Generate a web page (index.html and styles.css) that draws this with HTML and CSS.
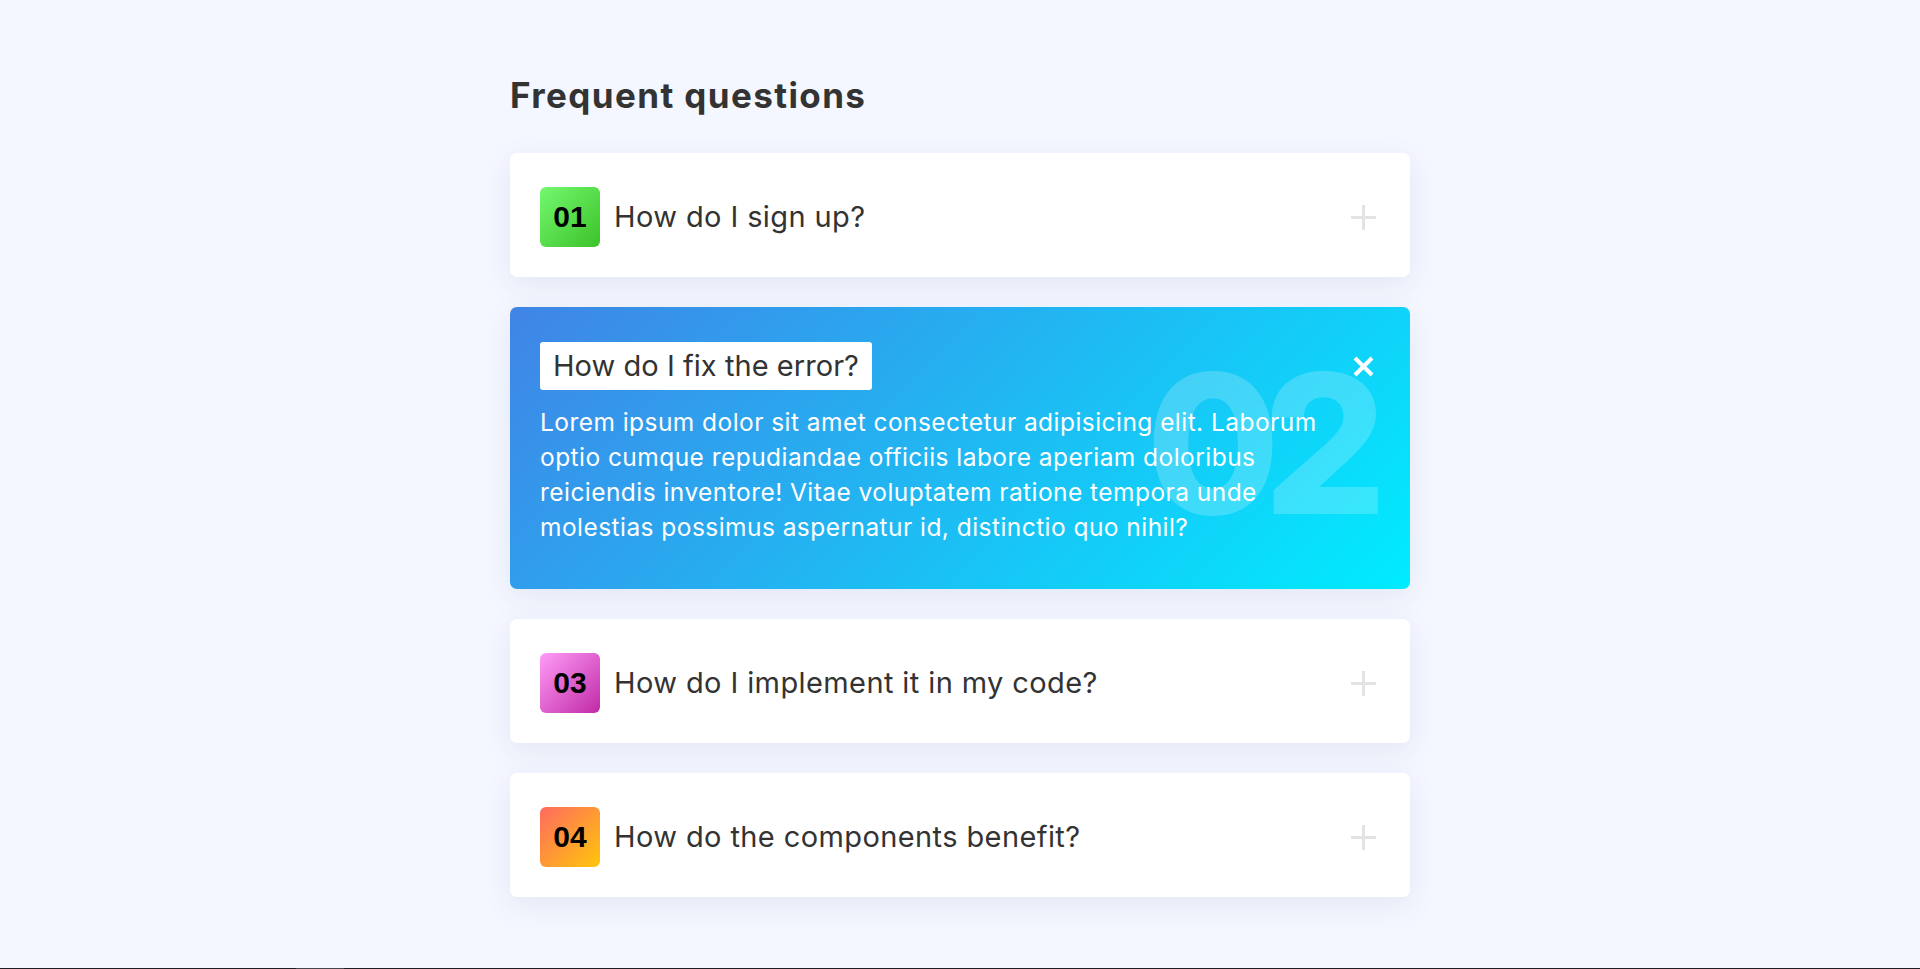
FILE: index.html
```html
<!DOCTYPE html>
<html lang="en">
<head>
<meta charset="utf-8">
<title>Frequent questions</title>
<link rel="stylesheet" href="styles.css">
</head>
<body>
<main class="faq">
  <h1 class="faq-title">Frequent questions</h1>

  <div class="card">
    <span class="num num-green">01</span>
    <span class="question">How do I sign up?</span>
    <span class="toggle">
      <svg width="25" height="25" viewBox="0 0 25 25"><path d="M12.5 0V25M0 12.5H25" stroke="#e3e3e6" stroke-width="3" fill="none"/></svg>
    </span>
  </div>

  <div class="card card-open">
    <span class="watermark">02</span>
    <div class="open-body">
      <span class="label">How do I fix the error?</span>
      <p class="answer">Lorem ipsum dolor sit amet consectetur adipisicing elit. Laborum optio cumque repudiandae officiis labore aperiam doloribus reiciendis inventore! Vitae voluptatem ratione tempora unde molestias possimus aspernatur id, distinctio quo nihil?</p>
    </div>
    <span class="toggle toggle-open">
      <svg width="21" height="21" viewBox="0 0 21 21"><path d="M2 2L19 19M19 2L2 19" stroke="#ffffff" stroke-width="4" fill="none"/></svg>
    </span>
  </div>

  <div class="card">
    <span class="num num-pink">03</span>
    <span class="question">How do I implement it in my code?</span>
    <span class="toggle">
      <svg width="25" height="25" viewBox="0 0 25 25"><path d="M12.5 0V25M0 12.5H25" stroke="#e3e3e6" stroke-width="3" fill="none"/></svg>
    </span>
  </div>

  <div class="card">
    <span class="num num-orange">04</span>
    <span class="question">How do the components benefit?</span>
    <span class="toggle">
      <svg width="25" height="25" viewBox="0 0 25 25"><path d="M12.5 0V25M0 12.5H25" stroke="#e3e3e6" stroke-width="3" fill="none"/></svg>
    </span>
  </div>
</main>
<div class="scrollbar"><span class="thumb"></span></div>
</body>
</html>
```

FILE: styles.css
```css
html, body {
  margin: 0;
  padding: 0;
}

body {
  background: #f4f7ff;
  font-family: "Inter", "Noto Sans", sans-serif;
  color: #333333;
  min-height: 969px;
}

.faq {
  width: 900px;
  margin: 0 auto;
  padding-top: 75px;
}

.faq-title {
  margin: 0 0 38px;
  font-size: 35px;
  line-height: 40px;
  font-weight: 700;
  color: #333333;
  letter-spacing: 1.4px;
}

.card {
  position: relative;
  display: flex;
  align-items: center;
  background: #ffffff;
  border-radius: 7px;
  padding: 34px 30px 30px;
  margin-bottom: 30px;
  box-shadow: 0 8px 30px rgba(30, 50, 120, 0.08);
  overflow: hidden;
}

.num {
  flex: 0 0 60px;
  width: 60px;
  height: 60px;
  border-radius: 6px;
  display: flex;
  align-items: center;
  justify-content: center;
  font-family: "Liberation Sans", Arial, sans-serif;
  font-weight: 700;
  font-size: 30px;
  color: #000000;
}

.num-green { background: linear-gradient(135deg, #74f870 0%, #3cc228 100%); }
.num-pink { background: linear-gradient(135deg, #ff9cf8 0%, #c02aa6 100%); }
.num-orange { background: linear-gradient(135deg, #ff6a60 0%, #ffc60a 100%); }

.question {
  flex: 1;
  margin-left: 14px;
  font-size: 29px;
  line-height: 40px;
  letter-spacing: 0.4px;
  color: #333333;
}

.toggle {
  flex: 0 0 30px;
  width: 30px;
  height: 48px;
  display: flex;
  align-items: center;
  justify-content: center;
  margin-right: 2px;
}

.card-open {
  align-items: flex-start;
  padding: 35px 30px 44px;
  background: linear-gradient(135deg, #4084e6 0%, #00ecff 100%);
}

.open-body {
  position: relative;
  z-index: 1;
  flex: 1;
  display: flex;
  flex-direction: column;
  align-items: flex-start;
}

.label {
  background: #ffffff;
  border-radius: 3px;
  padding: 4px 13px;
  font-size: 29px;
  line-height: 40px;
  letter-spacing: 0.05px;
  color: #333333;
}

.answer {
  margin: 15px 0 0;
  max-width: 800px;
  font-size: 24.5px;
  line-height: 35px;
  letter-spacing: 0.45px;
  color: #ffffff;
}

.toggle-open {
  position: relative;
  z-index: 1;
}

.watermark {
  position: absolute;
  right: 40px;
  top: 40px;
  font-size: 194px;
  line-height: 1;
  font-weight: 800;
  letter-spacing: -17px;
  color: rgba(255, 255, 255, 0.2);
  z-index: 0;
}

.scrollbar {
  position: fixed;
  left: 0;
  right: 0;
  bottom: 0;
  height: 1px;
  background: #1d1e25;
}

.scrollbar .thumb {
  position: absolute;
  left: 296px;
  width: 48px;
  top: 0;
  height: 1px;
  background: #44454c;
}
```
